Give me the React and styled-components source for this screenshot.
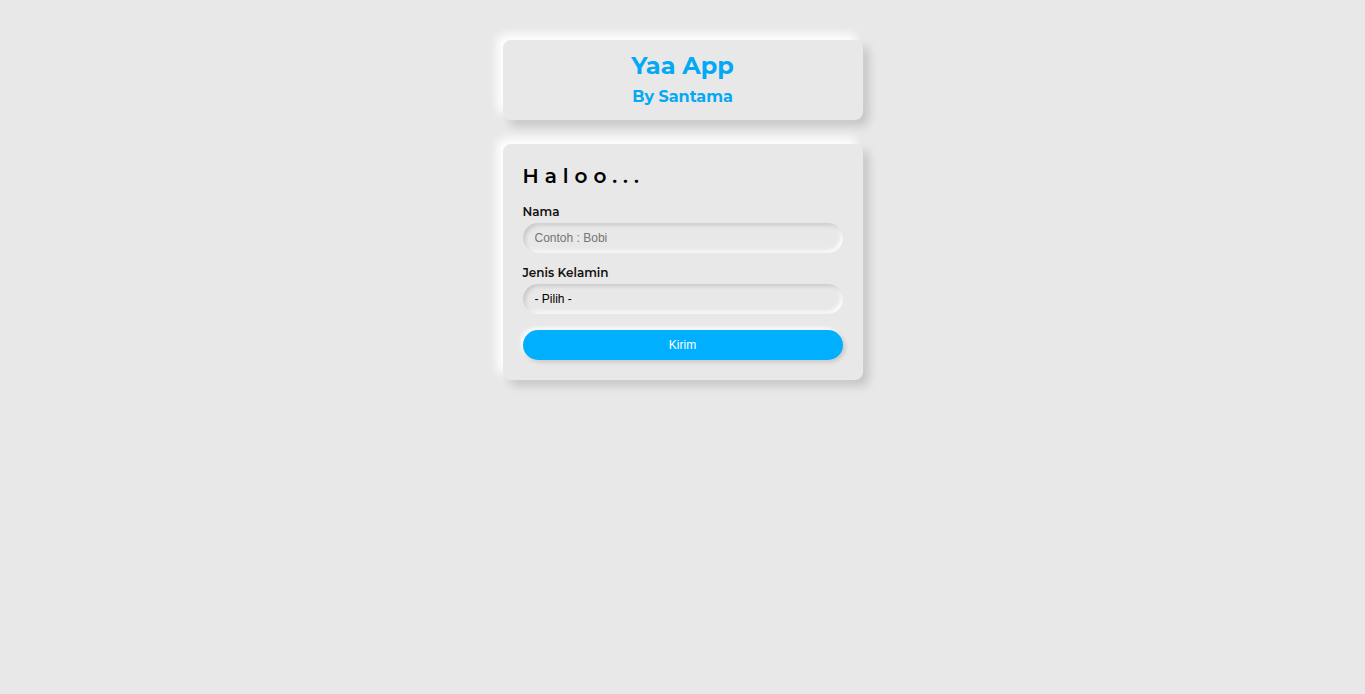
import React, { useState } from 'react';
import styled, { createGlobalStyle } from 'styled-components';

const GlobalStyle = createGlobalStyle`
    body {
        margin: 0;
        background: #e8e8e8;
        font-family: Montserrat, 'DejaVu Sans', sans-serif;
    }
`
const Page = styled.div`
    min-height: 100vh;
    display: flex;
    flex-direction: column;
    align-items: center;
    gap: 24px;
    padding-top: 40px;
    box-sizing: border-box;
`
const Card = styled.div`
    width: 360px;
    box-sizing: border-box;
    background: #e8e8e8;
    border-radius: 8px;
    box-shadow: -6px -6px 10px #ffffff, 6px 6px 10px rgba(0, 0, 0, 0.15);
    padding: 20px;
`
const Header = styled(Card)`
    height: 80px;
    padding: 0 0 2px;
    display: flex;
    flex-direction: column;
    align-items: center;
    justify-content: center;
    gap: 6px;
`
const Title = styled.h1`
    margin: 0;
    font-size: 24px;
    line-height: 30px;
    font-weight: 700;
    color: #03a9f4;
`
const Subtitle = styled.h2`
    margin: 0;
    font-size: 16px;
    line-height: 20px;
    font-weight: 700;
    color: #03a9f4;
`
const Greeting = styled.h3`
    margin: 0 0 16px;
    font-size: 20px;
    line-height: 24px;
    font-weight: 600;
    letter-spacing: 6px;
    color: #000;
`
const Field = styled.div`
    display: flex;
    flex-direction: column;
    gap: 4px;
    margin-bottom: ${props => props.last ? '16px' : '12px'};
`
const Label = styled.label`
    font-size: 12px;
    line-height: 15px;
    font-weight: 600;
    color: #111;
`
const Input = styled.input`
    height: 30px;
    width: 100%;
    box-sizing: border-box;
    border: 0;
    outline: 0;
    border-radius: 15px;
    background: #e8e8e8;
    padding: 0 12px;
    font-family: 'Liberation Sans', Arial, sans-serif;
    font-size: 12px;
    color: #000;
    box-shadow: inset 2px 2px 4px rgba(0, 0, 0, 0.15), inset -2px -2px 4px #ffffff;
    &::placeholder { color: #757575; }
`
const Select = styled(Input).attrs({ as: 'select' })`
    appearance: none;
`
const Button = styled.button`
    display: block;
    width: 100%;
    height: 30px;
    border: 0;
    border-radius: 15px;
    background: #00b0ff;
    color: #fff;
    font-family: 'Liberation Sans', Arial, sans-serif;
    font-size: 12px;
    box-shadow: 2px 2px 4px rgba(0, 0, 0, 0.15), -2px -2px 4px #ffffff;
    cursor: pointer;
`

export default function App() {
    const [nama, setNama] = useState('')
    const [jk, setJk] = useState('')
    return (
        <>
            <GlobalStyle />
            <Page>
                <Header>
                    <Title>Yaa App</Title>
                    <Subtitle>By Santama</Subtitle>
                </Header>
                <Card>
                    <Greeting>Haloo...</Greeting>
                    <Field>
                        <Label>Nama</Label>
                        <Input placeholder="Contoh : Bobi" value={nama} onChange={e => setNama(e.target.value)} />
                    </Field>
                    <Field last>
                        <Label>Jenis Kelamin</Label>
                        <Select value={jk} onChange={e => setJk(e.target.value)}>
                            <option value="">- Pilih -</option>
                            <option value="L">Laki-laki</option>
                            <option value="P">Perempuan</option>
                        </Select>
                    </Field>
                    <Button type="submit">Kirim</Button>
                </Card>
            </Page>
        </>
    )
}
